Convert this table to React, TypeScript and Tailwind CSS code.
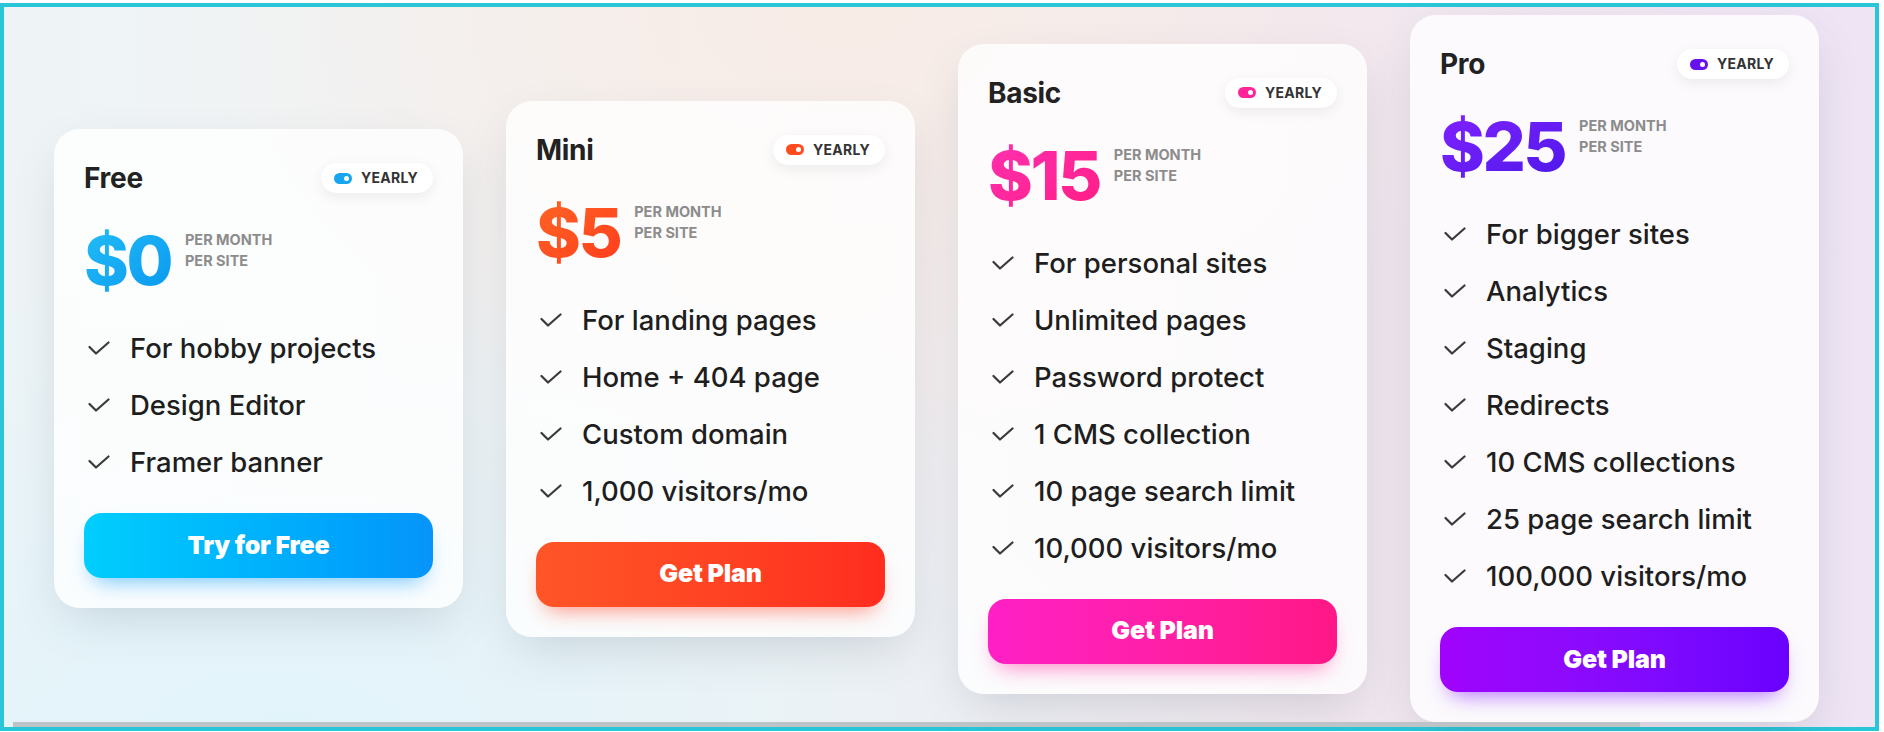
type Plan = {
  name: string;
  price: string;
  features: string[];
  cta: string;
  priceClass: string;
  toggleClass: string;
  buttonClass: string;
};

const plans: Plan[] = [
  {
    name: "Free",
    price: "$0",
    features: ["For hobby projects", "Design Editor", "Framer banner"],
    cta: "Try for Free",
    priceClass: "bg-gradient-to-br from-[#23bdf7] to-[#0a98ef]",
    toggleClass: "bg-[#17a6ef]",
    buttonClass:
      "bg-gradient-to-r from-[#00cefd] to-[#0794fa] shadow-[0_12px_22px_-10px_rgba(0,150,250,0.6)]",
  },
  {
    name: "Mini",
    price: "$5",
    features: ["For landing pages", "Home + 404 page", "Custom domain", "1,000 visitors/mo"],
    cta: "Get Plan",
    priceClass: "bg-gradient-to-br from-[#ff6424] to-[#ff3a1d]",
    toggleClass: "bg-[#ff4b1f]",
    buttonClass:
      "bg-gradient-to-r from-[#ff5527] to-[#ff2c1f] shadow-[0_12px_22px_-10px_rgba(255,60,30,0.6)]",
  },
  {
    name: "Basic",
    price: "$15",
    features: [
      "For personal sites",
      "Unlimited pages",
      "Password protect",
      "1 CMS collection",
      "10 page search limit",
      "10,000 visitors/mo",
    ],
    cta: "Get Plan",
    priceClass: "bg-gradient-to-br from-[#ff30b0] to-[#ff1a86]",
    toggleClass: "bg-[#ff2597]",
    buttonClass:
      "bg-gradient-to-r from-[#ff1fc6] to-[#ff1786] shadow-[0_12px_22px_-10px_rgba(255,30,150,0.6)]",
  },
  {
    name: "Pro",
    price: "$25",
    features: [
      "For bigger sites",
      "Analytics",
      "Staging",
      "Redirects",
      "10 CMS collections",
      "25 page search limit",
      "100,000 visitors/mo",
    ],
    cta: "Get Plan",
    priceClass: "bg-gradient-to-br from-[#8120ff] to-[#4e17ea]",
    toggleClass: "bg-[#6612ef]",
    buttonClass:
      "bg-gradient-to-r from-[#a102fc] to-[#6a00ff] shadow-[0_12px_22px_-10px_rgba(120,0,255,0.6)]",
  },
];

function Check() {
  return (
    <svg width="22" height="14" viewBox="0 0 22 14" fill="none" className="shrink-0">
      <path
        d="M1.5 6 L8 12.5 L20.5 1.5"
        stroke="#3a3a3a"
        strokeWidth="2.2"
        strokeLinecap="round"
        strokeLinejoin="round"
      />
    </svg>
  );
}

function PlanCard({ plan }: { plan: Plan }) {
  return (
    <div className="w-[409px] shrink-0 rounded-[26px] bg-white/80 px-[30px] pt-[34px] pb-[30px] shadow-[0_18px_50px_-12px_rgba(70,80,100,0.22)]">
      {/* Header */}
      <div className="flex h-[30px] items-center justify-between">
        <h3 className="text-[28px] font-bold leading-[30px] tracking-[-0.3px] text-[#222]">{plan.name}</h3>
        <div className="flex h-[30px] items-center gap-[9px] rounded-full bg-white pl-[13px] pr-[15px] shadow-[0_4px_14px_rgba(0,0,0,0.07)]">
          <span className={`flex h-[11px] w-[18px] items-center justify-end rounded-full pr-[3px] ${plan.toggleClass}`}>
            <span className="h-[5px] w-[5px] rounded-full bg-white" />
          </span>
          <span className="text-[14px] font-bold leading-none tracking-[0.3px] text-[#333]">YEARLY</span>
        </div>
      </div>

      {/* Price */}
      <div className="mt-[32px] flex items-start gap-[14px]">
        <span
          className={`bg-clip-text text-[68px] font-extrabold leading-[70px] tracking-[-2.5px] text-transparent ${plan.priceClass}`}
        >
          {plan.price}
        </span>
        <div className="mt-[4px] text-[14.5px] font-bold leading-[21px] text-[#8c8c8c]">
          <div>PER MONTH</div>
          <div>PER SITE</div>
        </div>
      </div>

      {/* Features */}
      <ul className="mt-[35px] flex flex-col gap-[21px]">
        {plan.features.map((f) => (
          <li key={f} className="flex h-[36px] items-center gap-[20px] pl-[4px]">
            <Check />
            <span className="text-[27.5px] font-medium leading-[36px] text-[#1e1e1e]">{f}</span>
          </li>
        ))}
      </ul>

      {/* CTA */}
      <button
        className={`mt-[33px] flex h-[65px] w-full items-center justify-center rounded-[18px] text-[25px] font-black tracking-[-0.2px] text-white ${plan.buttonClass}`}
      >
        {plan.cta}
      </button>
    </div>
  );
}

export default function App() {
  return (
    <div className="h-[732px] w-[1884px] overflow-hidden bg-white pt-[3px] font-[Inter,sans-serif]">
      <div className="flex h-[728px] w-[1879px] flex-col border-4 border-[#2ac6d8] bg-[radial-gradient(ellipse_at_15%_100%,#e2f4fb_0%,rgba(226,244,251,0)_45%),radial-gradient(ellipse_at_45%_0%,#f8ece6_0%,rgba(248,236,230,0)_45%),linear-gradient(90deg,#eef4f6_0%,#f3f1f1_40%,#f1e7ef_70%,#eee4f4_100%)]">
        <div className="flex h-[715px] items-center gap-[43px] pl-[50px] pt-[8px]">
          {plans.map((p) => (
            <PlanCard key={p.name} plan={p} />
          ))}
        </div>
        {/* scrollbar thumb */}
        <div className="h-[5px] pl-[9px]">
          <div className="h-[5px] w-[1627px] bg-[#bcc4c7]" />
        </div>
      </div>
    </div>
  );
}
